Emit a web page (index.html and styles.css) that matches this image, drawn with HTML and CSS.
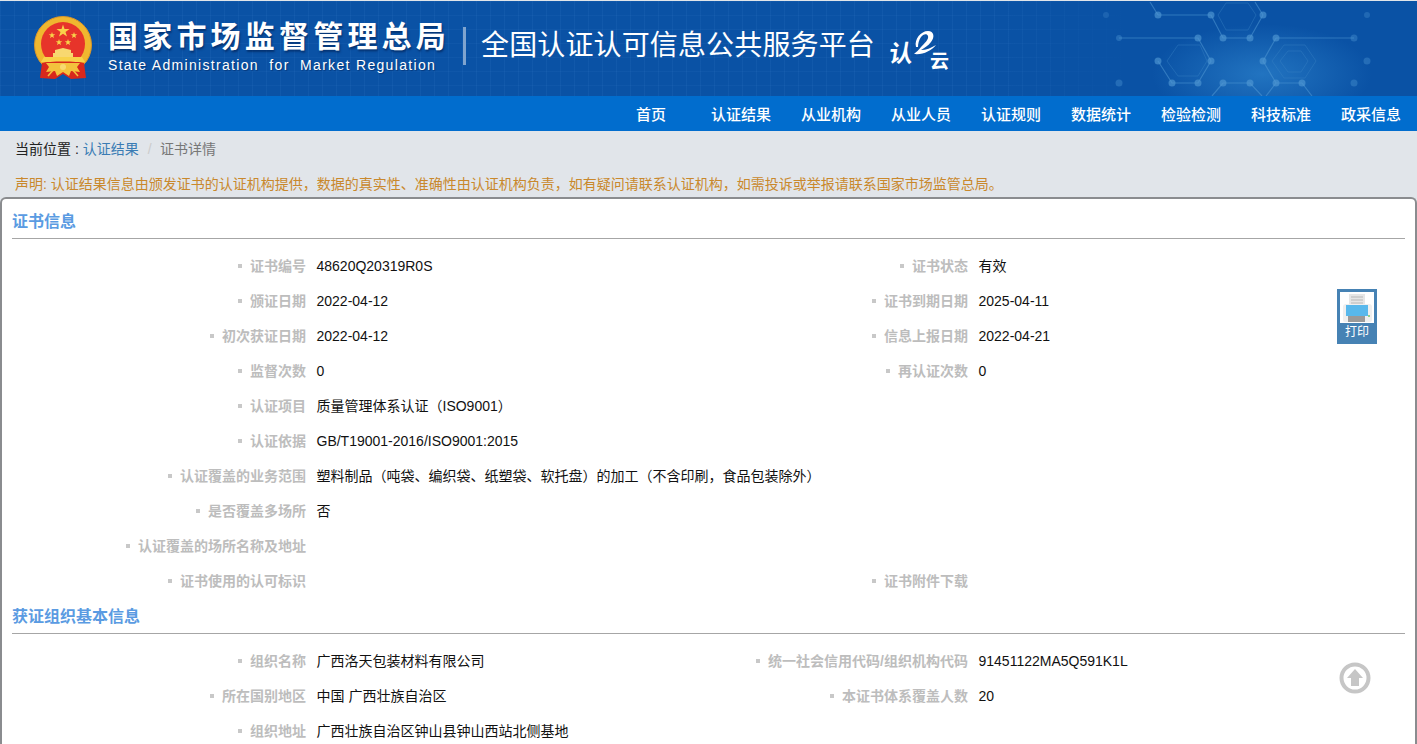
FILE: index.html
```html
<!DOCTYPE html>
<html lang="zh-CN">
<head>
  <meta charset="UTF-8">
  <title>全国认证认可信息公共服务平台</title>
  <link rel="stylesheet" href="styles.css">
</head>
<body>

  <!-- 页头 -->
  <div class="header">
    <svg class="network" width="437" height="95" viewBox="980 1 437 95">
      <defs>
        <radialGradient id="glow">
          <stop offset="0" stop-color="#2f86cf" stop-opacity="0.65"/>
          <stop offset="1" stop-color="#2f86cf" stop-opacity="0"/>
        </radialGradient>
      </defs>
      <ellipse cx="1262" cy="74" rx="110" ry="50" fill="url(#glow)"/>
      <g fill="none" stroke="#4f97d3" stroke-width="1.2" opacity="0.55">
        <path d="M1158 15H1211L1223 38H1250L1263 15"/>
        <path d="M1119 38H1198L1211 61L1198 83H1172L1158 61"/>
        <path d="M1276 38H1354M1276 38L1263 61L1276 83H1302M1223 83H1250L1262 96M1223 83L1212 96M1276 83L1266 96M1302 83L1312 96"/>
        <path d="M1150 2L1158 15M1263 15L1255 2"/>
      </g>
      <g fill="none" stroke="#3a84c6" stroke-width="1" opacity="0.4">
        <path d="M1218 15L1226 3H1248L1256 15L1248 30H1226Z"/>
        <path d="M1167 61L1178 45H1200L1207 61L1198 76H1178Z"/>
        <path d="M1272 61L1284 45H1305L1316 61L1305 78H1284Z"/>
        <path d="M1280 61L1288 51H1301L1308 61L1301 72H1288Z"/>
      </g>
      <g fill="#4f97d3" opacity="0.65">
        <circle cx="1158" cy="15" r="3.5"/><circle cx="1211" cy="15" r="3.5"/><circle cx="1263" cy="15" r="3.5"/>
        <circle cx="1367" cy="15" r="3" opacity="0.5"/><circle cx="1106" cy="15" r="3" opacity="0.4"/>
        <circle cx="1119" cy="38" r="3" opacity="0.6"/><circle cx="1198" cy="38" r="3.5"/><circle cx="1223" cy="38" r="3.5"/>
        <circle cx="1250" cy="38" r="3.5"/><circle cx="1276" cy="38" r="3.5"/><circle cx="1354" cy="38" r="3.5" opacity="0.6"/>
        <circle cx="1158" cy="61" r="3.5"/><circle cx="1211" cy="61" r="3.5"/><circle cx="1263" cy="61" r="3.5"/><circle cx="1367" cy="61" r="3.5" opacity="0.6"/>
        <circle cx="1119" cy="83" r="3.5" opacity="0.6"/><circle cx="1172" cy="83" r="3.5"/><circle cx="1198" cy="83" r="3.5"/>
        <circle cx="1223" cy="83" r="3.5"/><circle cx="1250" cy="83" r="3.5"/><circle cx="1276" cy="83" r="3.5"/>
        <circle cx="1302" cy="83" r="3.5"/><circle cx="1354" cy="83" r="3.5" opacity="0.6"/>
      </g>
    </svg>

    <!-- 国徽 -->
    <svg class="emblem" width="60" height="66" viewBox="0 0 60 66">
      <circle cx="30" cy="29" r="28.5" fill="#f0b72f" stroke="#d9952a" stroke-width="1"/>
      <circle cx="30" cy="28" r="22" fill="#e7342a"/>
      <path d="M30 8.500L31.500 13H36.500L32.500 16L34 20.500L30 17.800L26 20.500L27.500 16L23.500 13H28.500Z" fill="#f8d24a"/>
      <path d="M19 16L19.800 18.300H22.200L20.300 19.800L21 22L19 20.700L17 22L17.700 19.800L15.800 18.300H18.200ZM41 16L41.800 18.300H44.200L42.300 19.800L43 22L41 20.700L39 22L39.700 19.800L37.800 18.300H40.200ZM26 23L26.800 25.300H29.200L27.300 26.800L28 29L26 27.700L24 29L24.700 26.800L22.800 25.300H25.200ZM35 23L35.800 25.300H38.200L36.300 26.800L37 29L35 27.700L33 29L33.700 26.800L31.800 25.300H34.200Z" fill="#f8d24a"/>
      <path d="M22 34L30 32L38 34V37H40V41H20V37H22Z" fill="#f8d870"/>
      <path d="M11 41H49L52 46H8Z" fill="#f8d24a"/>
      <path d="M9 47C15 45 45 45 51 47L53 62L38 63L30 58L22 63L7 62Z" fill="#d8281c"/>
      <path d="M13 47H47L44 51L47 56L38 55L36 60L30 56L24 60L22 55L13 56L16 51Z" fill="#f3c23d"/>
      <circle cx="30" cy="51" r="3" fill="#f8d870"/>
      <path d="M22 52L15 60M38 52L45 60" stroke="#f3c23d" stroke-width="1.500"/>
    </svg>

    <div class="org">
      <div class="org-cn">国家市场监督管理总局</div>
      <div class="org-en">State Administration&nbsp; for&nbsp; Market Regulation</div>
    </div>
    <div class="divider"></div>
    <div class="platform">全国认证认可信息公共服务平台</div>
    <div class="cloud-logo">
      <span class="logo-ren">认</span>
      <svg class="logo-swoosh" width="24" height="26" viewBox="0 0 24 26">
        <path d="M3 17C1 9 8 1 15 1C21 1 22 7 18 12C15 16 11 18 8 20C13 20 18 18 23 15C18 21 10 25 1 24C3 22 6 20 8 17C12 13 16 9 15 6C14 3 10 4 8 7C6 10 5 13 5 17Z" fill="#fff"/>
      </svg>
      <span class="logo-yun">云</span>
    </div>
  </div>

  <!-- 导航 -->
  <div class="nav">
    <a>首页</a>
    <a>认证结果</a>
    <a>从业机构</a>
    <a>从业人员</a>
    <a>认证规则</a>
    <a>数据统计</a>
    <a>检验检测</a>
    <a>科技标准</a>
    <a>政采信息</a>
  </div>

  <div class="breadcrumb">
    当前位置 : <a>认证结果</a><span class="sep">/</span><span class="current">证书详情</span>
  </div>
  <div class="notice">声明: 认证结果信息由颁发证书的认证机构提供，数据的真实性、准确性由认证机构负责，如有疑问请联系认证机构，如需投诉或举报请联系国家市场监管总局。</div>

  <div class="panel">
    <h2 class="section-title">证书信息</h2>
    <div class="info-grid">
      <div class="pair"><span class="label">证书编号</span><span class="value">48620Q20319R0S</span></div>
      <div class="pair"><span class="label">证书状态</span><span class="value">有效</span></div>
      <div class="pair"><span class="label">颁证日期</span><span class="value">2022-04-12</span></div>
      <div class="pair"><span class="label">证书到期日期</span><span class="value">2025-04-11</span></div>
      <div class="pair"><span class="label">初次获证日期</span><span class="value">2022-04-12</span></div>
      <div class="pair"><span class="label">信息上报日期</span><span class="value">2022-04-21</span></div>
      <div class="pair"><span class="label">监督次数</span><span class="value">0</span></div>
      <div class="pair"><span class="label">再认证次数</span><span class="value">0</span></div>
      <div class="pair wide"><span class="label">认证项目</span><span class="value">质量管理体系认证（ISO9001）</span></div>
      <div class="pair wide"><span class="label">认证依据</span><span class="value">GB/T19001-2016/ISO9001:2015</span></div>
      <div class="pair wide"><span class="label">认证覆盖的业务范围</span><span class="value">塑料制品（吨袋、编织袋、纸塑袋、软托盘）的加工（不含印刷，食品包装除外）</span></div>
      <div class="pair wide"><span class="label">是否覆盖多场所</span><span class="value">否</span></div>
      <div class="pair wide"><span class="label">认证覆盖的场所名称及地址</span><span class="value"></span></div>
      <div class="pair"><span class="label">证书使用的认可标识</span><span class="value"></span></div>
      <div class="pair"><span class="label">证书附件下载</span><span class="value"></span></div>
    </div>

    <h2 class="section-title second">获证组织基本信息</h2>
    <div class="info-grid">
      <div class="pair"><span class="label">组织名称</span><span class="value">广西洛天包装材料有限公司</span></div>
      <div class="pair"><span class="label">统一社会信用代码/组织机构代码</span><span class="value">91451122MA5Q591K1L</span></div>
      <div class="pair"><span class="label">所在国别地区</span><span class="value">中国 广西壮族自治区</span></div>
      <div class="pair"><span class="label">本证书体系覆盖人数</span><span class="value">20</span></div>
      <div class="pair wide"><span class="label">组织地址</span><span class="value">广西壮族自治区钟山县钟山西站北侧基地</span></div>
    </div>
  </div>

  <!-- 悬浮按钮 -->
  <div class="print-btn">
    <svg width="34" height="31" viewBox="0 0 34 31">
      <rect width="34" height="31" fill="#fff"/>
      <rect x="9" y="2" width="16" height="12" fill="#e6e6e6"/>
      <path d="M11 5H23M11 8H23M11 11H23" stroke="#b8b8b8" stroke-width="1"/>
      <path d="M3 15Q3 12 6 12H29Q32 12 32 15V28Q32 30 30 30H5Q3 30 3 28Z" fill="#efefef"/>
      <path d="M6 13H28V24H6Z" fill="#58b8ec"/>
      <rect x="8" y="24" width="17" height="6" fill="#9a9a9a"/>
      <rect x="28" y="23" width="2" height="2" fill="#8fd08a"/>
    </svg>
    <span>打印</span>
  </div>
  <svg class="top-btn" width="32" height="32" viewBox="0 0 32 32">
    <circle cx="16" cy="16" r="13.500" fill="none" stroke="#c6c6c6" stroke-width="4"/>
    <path d="M16 7L24 16H20V24H12V16H8Z" fill="#c6c6c6"/>
  </svg>

</body>
</html>
```

FILE: styles.css
```css
html, body {
  margin: 0;
  height: 100%;
  overflow: hidden;
}

body {
  position: relative;
  font-family: "Liberation Sans", "Noto Sans CJK SC", sans-serif;
  font-size: 14px;
  color: #222;
  background: #e1e5ea;
}

/* 页头 */
.header {
  position: relative;
  display: flex;
  align-items: flex-start;
  height: 95px;
  border-top: 1px solid #e1e5ea;
  padding-left: 33px;
  overflow: hidden;
  color: #fff;
  background-color: #0a52a5;
  background-image:
    linear-gradient(to right, rgba(10, 82, 165, 0) 1000px, #0a52a5 1130px),
    repeating-linear-gradient(to right, rgba(60, 130, 205, 0.14) 0, rgba(60, 130, 205, 0.14) 1px, transparent 1px, transparent 14px),
    repeating-linear-gradient(to bottom, rgba(60, 130, 205, 0.11) 0, rgba(60, 130, 205, 0.11) 1px, transparent 1px, transparent 14px);
}

.network {
  position: absolute;
  top: 0;
  right: 0;
}

.emblem {
  flex: none;
  margin-top: 15px;
}

.org {
  margin-left: 15px;
  width: 345px;
  flex: none;
}

.org-cn {
  margin-top: 17px;
  font-size: 30px;
  line-height: 38px;
  font-weight: 700;
  letter-spacing: 4.2px;
  white-space: nowrap;
  text-shadow: 1px 2px 2px rgba(0, 30, 80, 0.6);
}

.org-en {
  font-size: 14px;
  line-height: 18px;
  letter-spacing: 1.32px;
  white-space: nowrap;
  text-shadow: 1px 1px 1px rgba(0, 30, 80, 0.5);
}

.divider {
  flex: none;
  width: 3px;
  height: 38px;
  margin: 26px 0 0 10px;
  background: #7fa4cf;
}

.platform {
  flex: none;
  margin: 24px 0 0 15px;
  font-size: 28px;
  line-height: 42px;
  letter-spacing: 0.14px;
  white-space: nowrap;
}

.cloud-logo {
  position: relative;
  flex: none;
  width: 62px;
  height: 50px;
  margin: 26px 0 0 14px;
}

.logo-ren {
  position: absolute;
  left: 0;
  top: 13px;
  font-size: 24px;
  line-height: 28px;
  font-weight: 700;
  transform: skewX(-8deg);
}

.logo-swoosh {
  position: absolute;
  left: 24px;
  top: 3px;
}

.logo-yun {
  position: absolute;
  left: 41px;
  top: 23px;
  font-size: 19px;
  line-height: 24px;
  font-weight: 700;
}

/* 导航 */
.nav {
  display: flex;
  justify-content: flex-end;
  height: 35px;
  padding-right: 1px;
  background: #016dce;
}

.nav a {
  width: 90px;
  font-size: 15px;
  line-height: 37px;
  font-weight: 500;
  text-align: center;
  color: #fff;
}

.breadcrumb {
  padding: 0 15px;
  height: 36px;
  line-height: 37px;
  color: #222;
}

.breadcrumb a {
  color: #3a7cb4;
}

.sep {
  margin: 0 8.500px 0 9px;
  color: #ccc;
}

.current {
  color: #777;
}

.notice {
  padding: 0 15px;
  height: 30px;
  line-height: 34px;
  color: #c9882c;
  white-space: nowrap;
}

/* 内容 */
.panel {
  padding: 0 10px;
  background: #fff;
  border: 2px solid #8a8c8f;
  border-bottom: 0;
  border-radius: 6px 6px 0 0;
}

.section-title {
  margin: 0 0 10px;
  height: 40px;
  box-sizing: border-box;
  font-size: 16px;
  line-height: 45px;
  font-weight: 700;
  color: #5a9be2;
  border-bottom: 1px solid #a6a6a6;
}

.section-title.second {
  height: 35px;
  line-height: 35px;
}

.info-grid {
  display: grid;
  grid-template-columns: 662px 1fr;
  grid-auto-rows: 35px;
}

.pair {
  display: flex;
  line-height: 35px;
}

.wide {
  grid-column: 1 / -1;
}

.label {
  flex: none;
  width: 294px;
  margin-right: 10.500px;
  text-align: right;
  font-weight: 700;
  color: #bdbdbd;
}

.label::before {
  content: "";
  display: inline-block;
  width: 4px;
  height: 4px;
  margin-right: 8px;
  vertical-align: 3px;
  background: #c8c8c8;
}

.value {
  color: #111;
  white-space: nowrap;
}

/* 悬浮按钮 */
.print-btn {
  position: absolute;
  left: 1337px;
  top: 289px;
  box-sizing: border-box;
  width: 40px;
  height: 55px;
  padding: 3px;
  text-align: center;
  color: #fff;
  font-size: 12px;
  background: #4682b4;
}

.print-btn svg {
  display: block;
}

.print-btn span {
  display: block;
  line-height: 18px;
}

.top-btn {
  position: absolute;
  left: 1339px;
  top: 662px;
}
```
